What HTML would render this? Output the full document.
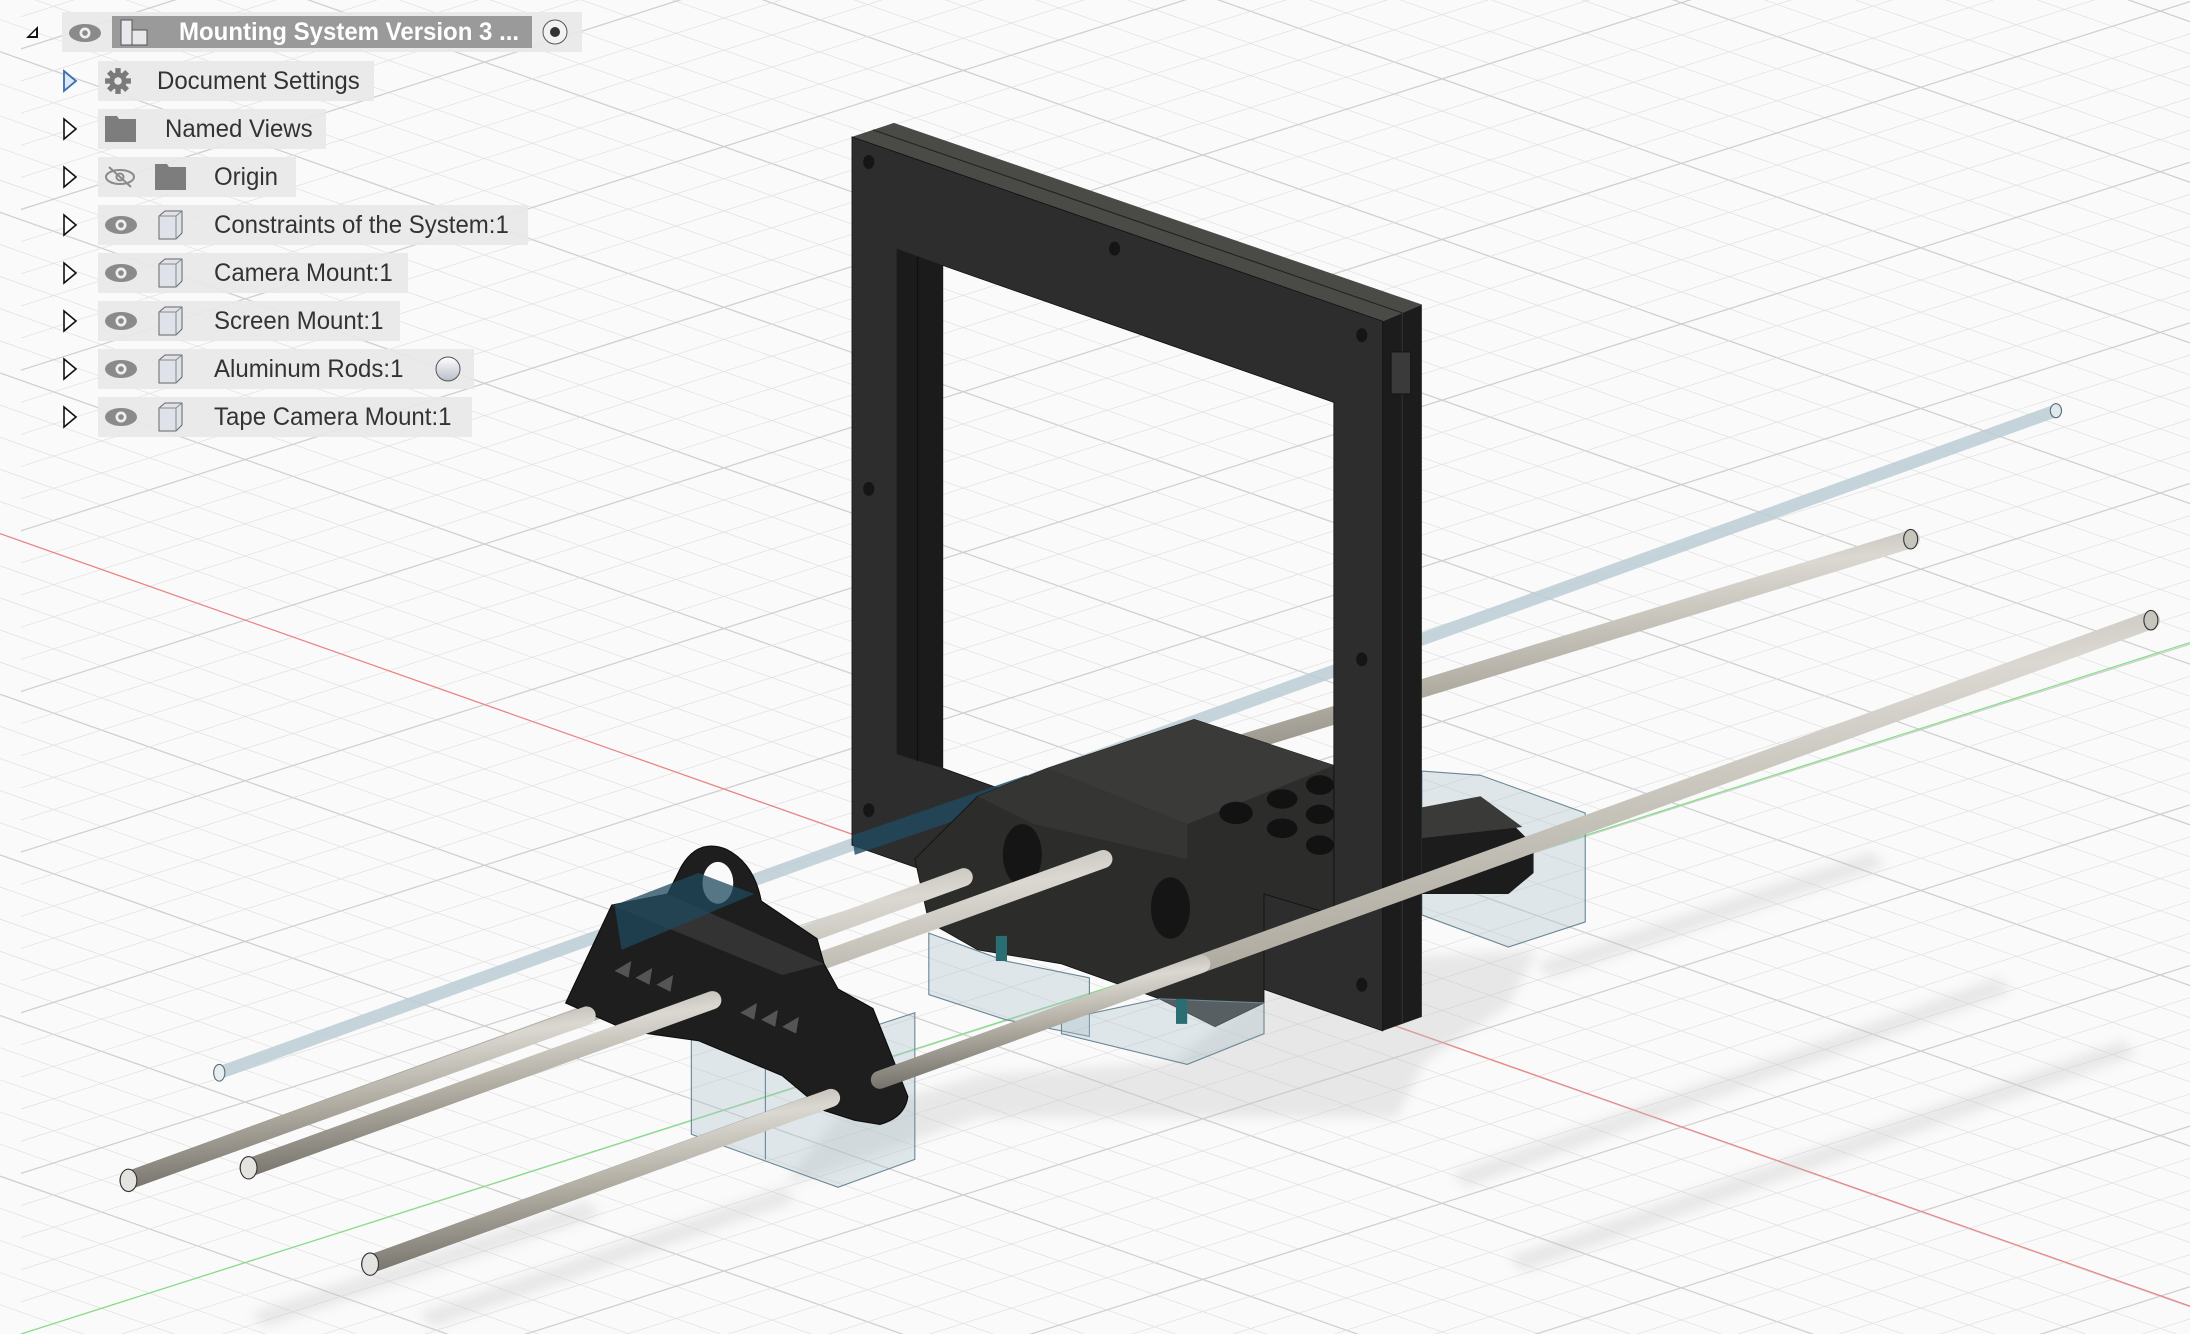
<!DOCTYPE html>
<html><head><meta charset="utf-8">
<style>
html,body{margin:0;padding:0;width:2190px;height:1334px;overflow:hidden;background:#fafafa;}
#scene{position:absolute;left:0;top:0;display:block;}
.tree{position:absolute;left:0;top:0;width:0;height:0;font-family:"Liberation Sans","DejaVu Sans",sans-serif;font-size:25px;color:#333;}
.row{position:absolute;height:40px;background:rgba(232,232,232,0.92);}
.lbl{position:absolute;white-space:nowrap;transform:scaleX(0.96);transform-origin:0 0;line-height:28px;}
.tri{position:absolute;}
</style></head><body>
<svg id="scene" width="2190" height="1334" viewBox="0 0 1568 955" preserveAspectRatio="none" xmlns="http://www.w3.org/2000/svg">
<defs>
<linearGradient id="rod" x1="0" y1="0" x2="0.35" y2="1">
<stop offset="0" stop-color="#8d897f"/><stop offset="0.35" stop-color="#dad8d1"/><stop offset="0.6" stop-color="#b4b0a6"/><stop offset="1" stop-color="#6f6c64"/>
</linearGradient>
<filter id="blur"><feGaussianBlur stdDeviation="4"/></filter>
</defs>
<rect width="1568" height="955" fill="#fafafa"/>
<g id="grid"></g>
<line x1="0" y1="382" x2="1568" y2="935" stroke="#f08080" stroke-width="0.8"/>
<line x1="15" y1="955" x2="1568" y2="460" stroke="#7ee07e" stroke-width="0.8"/>
<g fill="#c4c4c4" opacity="0.35" filter="url(#blur)">
<polygon points="560,850 700,800 1000,800 1020,760 1080,720 1100,680 930,690 840,760 700,770 600,800"/>
<polygon points="180,940 420,860 430,870 190,950"/>
<polygon points="300,940 560,850 570,860 310,950"/>
<polygon points="1040,840 1430,700 1440,710 1050,850"/>
<polygon points="1080,900 1520,745 1530,755 1090,910"/>
<polygon points="1100,690 1340,610 1350,620 1110,700"/>
</g>
<line x1="157" y1="768" x2="1472" y2="294" stroke="#bccdd6" stroke-width="9" stroke-linecap="round" opacity="0.85"/>
<ellipse cx="1472" cy="294" rx="4" ry="5" fill="#dfe8ec" stroke="#5b6e78" stroke-width="0.8"/>
<ellipse cx="157" cy="768" rx="4" ry="6" fill="#e6eef1" stroke="#5b6e78" stroke-width="0.8"/>
<line x1="700" y1="590" x2="1368" y2="386" stroke="url(#rod)" stroke-width="13" stroke-linecap="round"/>
<polygon points="1018,552 1060,555 1135,582 1135,660 1080,678 1018,655" fill="#a8c0cc" fill-opacity="0.35" stroke="#6b8795" stroke-width="0.8"/>
<polygon points="610,98 640,88 1018,218 990,230" fill="#4a4a47"/>
<line x1="625" y1="93" x2="1004" y2="224" stroke="#222" stroke-width="0.8"/>
<polygon points="990,230 1018,218 1018,728 990,738" fill="#1c1c1c"/>
<line x1="1004" y1="224" x2="1004" y2="733" stroke="#333" stroke-width="0.8"/>
<path d="M610,98 L990,230 L990,738 L610,605 Z M675,190 L675,550 L955,650 L955,288 Z" fill="#2d2d2d" fill-rule="evenodd" stroke="#111" stroke-width="0.6"/>
<polygon points="642,178 675,190 675,550 642,540" fill="#1b1b1b"/>
<line x1="657" y1="184" x2="657" y2="545" stroke="#0e0e0e" stroke-width="0.8"/>
<rect x="996" y="252" width="14" height="30" fill="#3a3a3a" stroke="#111" stroke-width="0.6"/>
<g fill="#151515"><ellipse cx="622" cy="116" rx="4" ry="5"/><ellipse cx="798" cy="178" rx="4" ry="5"/><ellipse cx="975" cy="240" rx="4" ry="5"/><ellipse cx="622" cy="350" rx="4" ry="5"/><ellipse cx="975" cy="472" rx="4" ry="5"/><ellipse cx="622" cy="580" rx="4" ry="5"/><ellipse cx="975" cy="705" rx="4" ry="5"/></g>
<polygon points="610,598 735,555 740,568 612,612" fill="#1f4a5e" opacity="0.8"/>
<polygon points="750,550 855,515 955,548 955,655 905,640 905,718 870,735 830,715 760,690 700,680 665,660 655,615 700,570" fill="#2c2c2a" stroke="#111" stroke-width="0.6"/>
<polygon points="750,550 855,515 955,548 850,590" fill="#3a3a38"/>
<polygon points="700,570 750,550 850,590 850,615 740,590" fill="#353533"/>
<g fill="#121212"><ellipse cx="885" cy="582" rx="12" ry="8"/><ellipse cx="918" cy="572" rx="11" ry="7"/><ellipse cx="918" cy="593" rx="11" ry="7"/><ellipse cx="945" cy="562" rx="10" ry="7"/><ellipse cx="945" cy="583" rx="10" ry="7"/><ellipse cx="945" cy="605" rx="10" ry="7"/></g>
<ellipse cx="732" cy="612" rx="14" ry="22" fill="#151515"/>
<ellipse cx="838" cy="650" rx="14" ry="22" fill="#151515"/>
<polygon points="1018,578 1085,592 1098,605 1098,625 1080,640 1018,640" fill="#1c1c1c"/>
<polygon points="1018,578 1060,570 1090,592 1018,600" fill="#3a3a38"/>
<polygon points="665,668 720,688 780,700 780,742 720,730 665,712" fill="#a8c0cc" fill-opacity="0.35" stroke="#6b8795" stroke-width="0.8"/>
<polygon points="760,730 830,715 905,718 905,740 850,762 760,740" fill="#a8c0cc" fill-opacity="0.35" stroke="#6b8795" stroke-width="0.8"/>
<rect x="713" y="670" width="8" height="18" fill="#2a6e74"/>
<rect x="842" y="715" width="8" height="18" fill="#2a6e74"/>
<line x1="265" y1="905" x2="1540" y2="444" stroke="url(#rod)" stroke-width="13" stroke-linecap="round"/>
<line x1="178" y1="836" x2="790" y2="615" stroke="url(#rod)" stroke-width="13" stroke-linecap="round"/>
<line x1="92" y1="845" x2="690" y2="628" stroke="url(#rod)" stroke-width="13" stroke-linecap="round"/>
<polygon points="495,740 548,760 655,725 655,830 600,850 495,812" fill="#a8c0cc" fill-opacity="0.35" stroke="#6b8795" stroke-width="0.8"/>
<line x1="548" y1="760" x2="548" y2="830" stroke="#6b8795" stroke-width="0.8"/>
<path d="M405,718 L438,648 L478,640 L488,620 Q500,600 520,608 Q540,618 545,645 L585,672 L590,690 L600,708 L625,722 L650,785 Q648,800 630,805 L612,802 L590,795 L560,770 L500,745 L450,738 Z" fill="#1e1e1e" stroke="#0c0c0c" stroke-width="0.8"/>
<polygon points="438,648 478,640 590,690 560,698" fill="#333"/>
<ellipse cx="514" cy="632" rx="11" ry="15" fill="#fafafa"/>
<polygon points="440,648 500,625 540,640 445,680" fill="#1f4a5e" opacity="0.75"/>
<g fill="#555"><polygon points="440,695 452,688 450,700"/><polygon points="455,700 467,693 465,705"/><polygon points="470,705 482,698 480,710"/><polygon points="530,725 542,718 540,730"/><polygon points="545,730 557,723 555,735"/><polygon points="560,735 572,728 570,740"/></g>
<line x1="178" y1="836" x2="510" y2="716" stroke="url(#rod)" stroke-width="13" stroke-linecap="round"/>
<line x1="92" y1="845" x2="420" y2="727" stroke="url(#rod)" stroke-width="13" stroke-linecap="round"/>
<line x1="265" y1="905" x2="595" y2="786" stroke="url(#rod)" stroke-width="13" stroke-linecap="round"/>
<line x1="630" y1="773" x2="860" y2="690" stroke="url(#rod)" stroke-width="13" stroke-linecap="round"/>
<g fill="#e4e3df" stroke="#333" stroke-width="0.8"><ellipse cx="92" cy="845" rx="6" ry="8"/><ellipse cx="178" cy="836" rx="6" ry="8"/><ellipse cx="265" cy="905" rx="6" ry="8"/><ellipse cx="1368" cy="386" rx="5" ry="7" fill="#c8c5bd"/><ellipse cx="1540" cy="444" rx="5" ry="7" fill="#c8c5bd"/></g>
</svg>
<div class="tree">
  <svg class="tri" style="left:25px;top:25px" width="14" height="14"><polygon points="1,13 13,1 13,13" fill="#111"/><polygon points="5,11 11,5 11,11" fill="#fff"/></svg>
  <div class="row" style="left:62px;top:12px;width:520px;height:40px"></div>
  <svg style="position:absolute;left:68px;top:21px" width="34" height="24"><ellipse cx="17" cy="12" rx="16" ry="9" fill="#8a8a8a"/><circle cx="17" cy="12" r="5.5" fill="#eee"/><circle cx="17" cy="12" r="2.8" fill="#8a8a8a"/></svg>
  <div style="position:absolute;left:112px;top:16px;width:420px;height:32px;background:#9a9a9a"></div>
  <svg style="position:absolute;left:118px;top:16px" width="34" height="32"><rect x="3" y="4" width="11" height="25" fill="#e8e8ec" stroke="#555"/><rect x="14" y="14" width="15" height="15" fill="#e8e8ec" stroke="#555"/></svg>
  <div class="lbl" style="left:179px;top:18px;color:#fff;font-weight:bold">Mounting System Version 3 ...</div>
  <svg style="position:absolute;left:539px;top:17px" width="32" height="30"><circle cx="16" cy="15" r="12" fill="#f2f2f2" stroke="#555"/><circle cx="16" cy="15" r="5" fill="#333"/></svg>

  <div class="row" style="left:98px;top:61px;width:276px"></div>
  <svg class="tri" style="left:62px;top:69px" width="16" height="24"><polygon points="2,2 14,12 2,22" fill="#dde8f5" stroke="#3a6fb0" stroke-width="1.8"/></svg>
  <svg style="position:absolute;left:104px;top:67px" width="28" height="28" viewBox="0 0 26 26"><g fill="#7a7a7a"><circle cx="13" cy="13" r="8"/><rect x="10.5" y="1" width="5" height="24"/><rect x="1" y="10.5" width="24" height="5"/><rect x="10.5" y="1" width="5" height="24" transform="rotate(45 13 13)"/><rect x="10.5" y="1" width="5" height="24" transform="rotate(-45 13 13)"/></g><circle cx="13" cy="13" r="3.5" fill="#e8e8e8"/></svg>
  <div class="lbl" style="left:157px;top:67px">Document Settings</div>

  <div class="row" style="left:98px;top:109px;width:228px"></div>
  <svg class="tri" style="left:62px;top:117px" width="16" height="24"><polygon points="2,2 14,12 2,22" fill="#fff" stroke="#111" stroke-width="1.6"/></svg>
  <svg style="position:absolute;left:104px;top:115px" width="33" height="28"><path d="M1,1 H13 L15,4 H32 V27 H1 Z" fill="#7d7d7d"/></svg>
  <div class="lbl" style="left:165px;top:115px">Named Views</div>

  <div class="row" style="left:98px;top:157px;width:198px"></div>
  <svg class="tri" style="left:62px;top:165px" width="16" height="24"><polygon points="2,2 14,12 2,22" fill="#fff" stroke="#111" stroke-width="1.6"/></svg>
  <svg style="position:absolute;left:104px;top:165px" width="32" height="24"><ellipse cx="16" cy="12" rx="14" ry="7" fill="none" stroke="#8a8a8a" stroke-width="2"/><circle cx="16" cy="12" r="3.5" fill="none" stroke="#8a8a8a" stroke-width="2"/><line x1="5" y1="2" x2="27" y2="22" stroke="#8a8a8a" stroke-width="2"/></svg>
  <svg style="position:absolute;left:154px;top:163px" width="33" height="28"><path d="M1,1 H13 L15,4 H32 V27 H1 Z" fill="#7d7d7d"/></svg>
  <div class="lbl" style="left:214px;top:163px">Origin</div>

  <div class="row" style="left:98px;top:205px;width:430px"></div>
  <div class="row" style="left:98px;top:253px;width:310px"></div>
  <div class="row" style="left:98px;top:301px;width:302px"></div>
  <div class="row" style="left:98px;top:349px;width:376px"></div>
  <div class="row" style="left:98px;top:397px;width:374px"></div>
</div>
<div class="tree" id="comp"></div>
<script>
(function(){
 var names=["Constraints of the System:1","Camera Mount:1","Screen Mount:1","Aluminum Rods:1","Tape Camera Mount:1"];
 var h="";
 for(var i=0;i<5;i++){
  var t=205+48*i;
  h+='<svg class="tri" style="left:62px;top:'+(t+8)+'px" width="16" height="24"><polygon points="2,2 14,12 2,22" fill="#fff" stroke="#111" stroke-width="1.6"/></svg>';
  h+='<svg style="position:absolute;left:104px;top:'+(t+8)+'px" width="34" height="24"><ellipse cx="17" cy="12" rx="16" ry="9" fill="#8a8a8a"/><circle cx="17" cy="12" r="5.5" fill="#eee"/><circle cx="17" cy="12" r="2.8" fill="#8a8a8a"/></svg>';
  h+='<svg style="position:absolute;left:156px;top:'+(t+4)+'px" width="30" height="32"><polygon points="3,7 9,2 26,2 26,24 20,30 3,30" fill="#dfe2ea" stroke="#666"/><polyline points="3,7 20,7 20,30" fill="none" stroke="#888"/><line x1="20" y1="7" x2="26" y2="2" stroke="#888"/></svg>';
  h+='<div class="lbl" style="left:214px;top:'+(t+6)+'px">'+names[i]+'</div>';
  if(i==3) h+='<svg style="position:absolute;left:431px;top:'+(t+5)+'px" width="34" height="30"><defs><linearGradient id="bg1" x1="0" y1="0" x2="0" y2="1"><stop offset="0" stop-color="#fff"/><stop offset="1" stop-color="#b8bcc8"/></linearGradient></defs><circle cx="17" cy="15" r="12" fill="url(#bg1)" stroke="#555"/></svg>';
 }
 document.getElementById('comp').innerHTML=h;
 var g=document.getElementById('grid'),s="";
 var sa=0.353, sb=-0.318, sp=23;
 for(var k=-80;k<80;k++){
  var c=382+k*sp;
  var w=(k%5==0)?0.9:0.5, col=(k%5==0)?"#cfcfcf":"#e0e0e0";
  s+='<line x1="0" y1="'+c+'" x2="1568" y2="'+(c+sa*1568)+'" stroke="'+col+'" stroke-width="'+w+'"/>';
 }
 for(var k=-80;k<120;k++){
  var c=955+k*sp;
  var w=(k%5==0)?0.9:0.5, col=(k%5==0)?"#cfcfcf":"#e0e0e0";
  s+='<line x1="15" y1="'+c+'" x2="1568" y2="'+(c+sb*1553)+'" stroke="'+col+'" stroke-width="'+w+'"/>';
 }
 g.innerHTML=s;
})();
</script>
</body></html>
